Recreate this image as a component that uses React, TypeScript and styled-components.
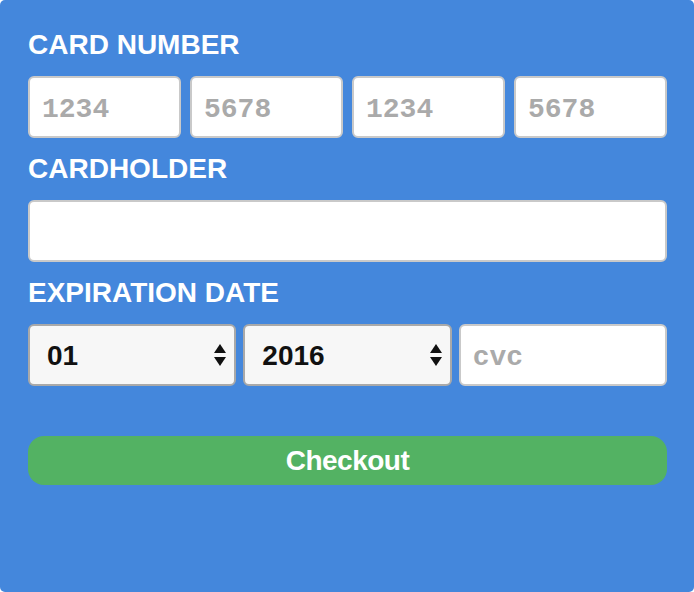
import React from "react";
import styled, { createGlobalStyle } from "styled-components";

const Global = createGlobalStyle`
  html, body { margin: 0; padding: 0; background: #ffffff; }
  * { box-sizing: border-box; }
`;

const Panel = styled.form`
  width: 694px;
  height: 592px;
  background: #4487dc;
  border-radius: 5px;
  padding: 29px 27px 0 28px;
  display: flex;
  flex-direction: column;
  font-family: "Liberation Sans", Arial, sans-serif;
`;

const Label = styled.label`
  display: block;
  color: #ffffff;
  font-weight: bold;
  font-size: 28px;
  line-height: 32px;
  margin-bottom: 15px;
`;

const Row = styled.div<{ $cols: number; $gap: number }>`
  display: grid;
  grid-template-columns: repeat(${(p) => p.$cols}, 1fr);
  column-gap: ${(p) => p.$gap}px;
  margin-bottom: 15px;
`;

const TextInput = styled.input`
  width: 100%;
  height: 62px;
  border: 2px solid #c9c9c9;
  border-radius: 6px;
  background: #ffffff;
  padding: 4px 12px 0 12px;
  font-family: "Liberation Mono", "Courier New", monospace;
  font-weight: 700;
  font-size: 28px;
  color: #333;
  outline: none;
  &::placeholder { color: #aaaaaa; font-weight: 700; }
`;

const WideInput = styled(TextInput)`
  margin-bottom: 15px;
`;

const SelectWrap = styled.div`
  position: relative;
  height: 62px;
`;

const Select = styled.select`
  appearance: none;
  -webkit-appearance: none;
  width: 100%;
  height: 100%;
  border: 2px solid #a9a9a9;
  border-radius: 6px;
  background: #f7f7f7;
  padding: 0 40px 0 17px;
  font-family: "Liberation Sans", Arial, sans-serif;
  font-weight: bold;
  font-size: 28px;
  color: #111;
  outline: none;
`;

const Arrows = styled.svg`
  position: absolute;
  right: 9px;
  top: 50%;
  transform: translateY(-50%);
  pointer-events: none;
`;

const Button = styled.button`
  margin-top: 35px;
  width: 100%;
  height: 49px;
  border: none;
  border-radius: 16px;
  background: #53b263;
  color: #ffffff;
  font-family: "Liberation Sans", Arial, sans-serif;
  font-weight: bold;
  font-size: 28px;
  letter-spacing: -0.5px;
  cursor: pointer;
`;

const ArrowIcon = () => (
  <Arrows width="14" height="28" viewBox="0 0 14 28">
    <polygon points="7,3 13,12 1,12" fill="#111" />
    <polygon points="1,16 13,16 7,25" fill="#111" />
  </Arrows>
);

const months = ["01", "02", "03", "04", "05", "06", "07", "08", "09", "10", "11", "12"];
const years = ["2016", "2017", "2018", "2019", "2020", "2021"];

export default function App() {
  return (
    <>
      <Global />
      <Panel onSubmit={(e) => e.preventDefault()}>
        <Label>CARD NUMBER</Label>
        <Row $cols={4} $gap={9}>
          <TextInput placeholder="1234" />
          <TextInput placeholder="5678" />
          <TextInput placeholder="1234" />
          <TextInput placeholder="5678" />
        </Row>
        <Label>CARDHOLDER</Label>
        <WideInput />
        <Label>EXPIRATION DATE</Label>
        <Row $cols={3} $gap={7}>
          <SelectWrap>
            <Select defaultValue="01">
              {months.map((m) => (
                <option key={m}>{m}</option>
              ))}
            </Select>
            <ArrowIcon />
          </SelectWrap>
          <SelectWrap>
            <Select defaultValue="2016">
              {years.map((y) => (
                <option key={y}>{y}</option>
              ))}
            </Select>
            <ArrowIcon />
          </SelectWrap>
          <TextInput placeholder="cvc" />
        </Row>
        <Button type="submit">Checkout</Button>
      </Panel>
    </>
  );
}
